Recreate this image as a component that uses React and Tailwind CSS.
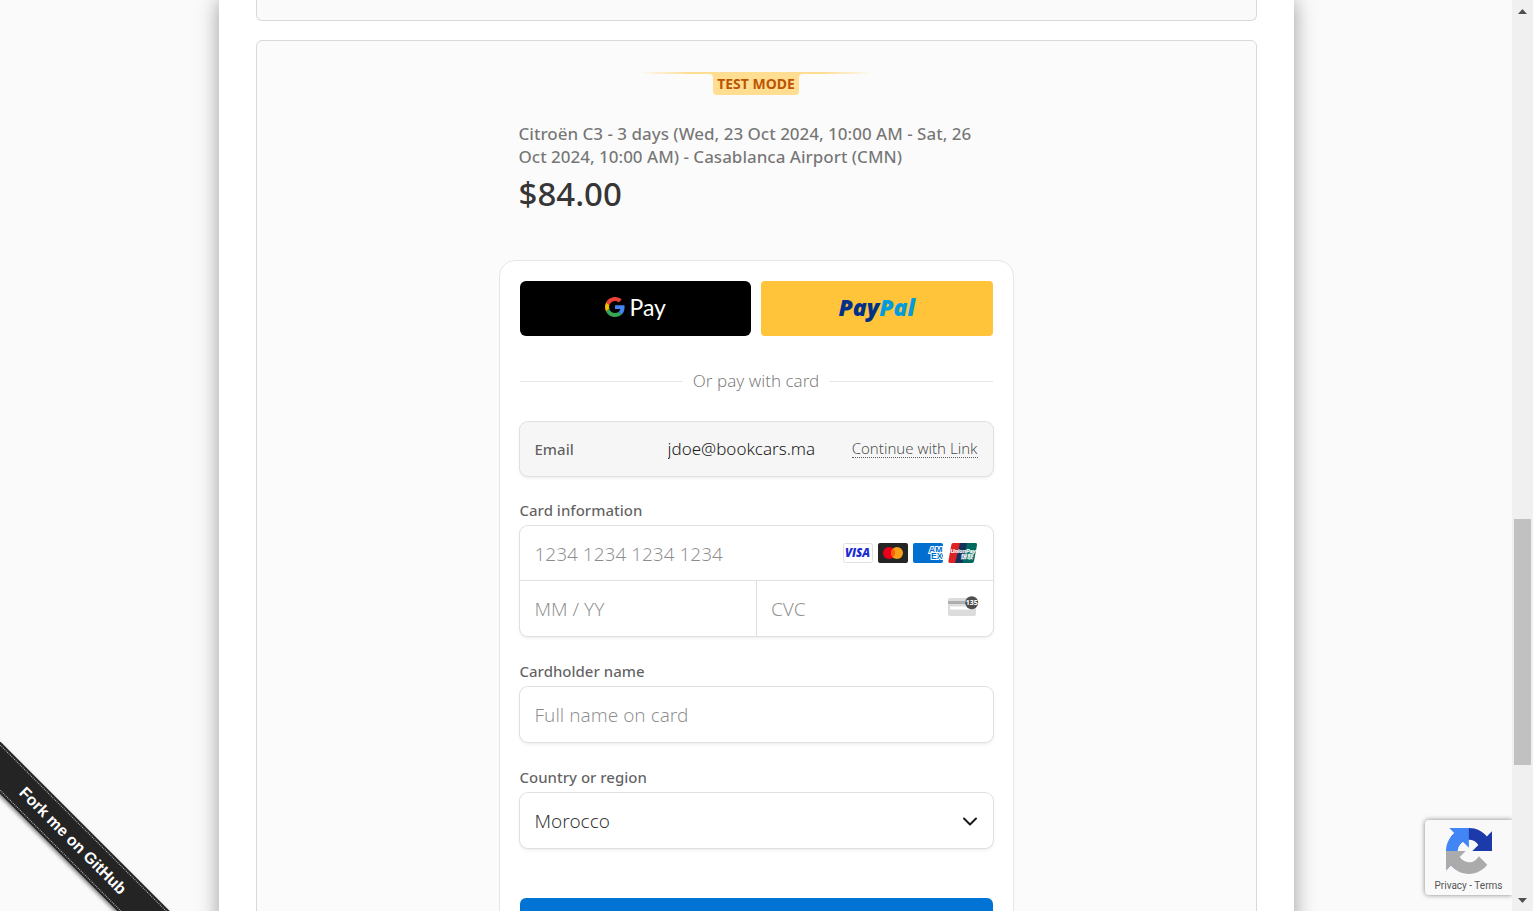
import React from "react";

const fieldBox =
  "rounded-lg shadow-[0_0_0_1px_#e0e0e0,0_2px_4px_0_rgba(0,0,0,0.07),0_1px_2px_0_rgba(0,0,0,0.05)]";
const labelText = "block text-[15px] leading-5 font-medium text-[#1a1a1a]/70";
const inputText =
  "block w-full min-w-0 bg-transparent pt-[2px] text-[19px] font-light text-[#1a1a1a]/90 outline-none placeholder:text-[#1a1a1a]/50";

function GoogleG() {
  return (
    <svg className="size-5" viewBox="0 0 48 48" aria-hidden="true">
      <path fill="#EA4335" d="M24 9.5c3.54 0 6.71 1.22 9.21 3.6l6.85-6.85C35.9 2.38 30.47 0 24 0 14.62 0 6.51 5.38 2.56 13.22l7.98 6.19C12.43 13.72 17.74 9.5 24 9.5z" />
      <path fill="#4285F4" d="M46.98 24.55c0-1.57-.15-3.09-.38-4.55H24v9.02h12.94c-.58 2.96-2.26 5.48-4.78 7.18l7.73 6c4.51-4.18 7.09-10.36 7.09-17.65z" />
      <path fill="#FBBC05" d="M10.53 28.59c-.48-1.45-.76-2.99-.76-4.59s.27-3.14.76-4.59l-7.98-6.19C.92 16.46 0 20.12 0 24c0 3.88.92 7.54 2.56 10.78l7.97-6.19z" />
      <path fill="#34A853" d="M24 48c6.48 0 11.93-2.13 15.89-5.81l-7.73-6c-2.15 1.45-4.92 2.3-8.16 2.3-6.26 0-11.57-4.22-13.47-9.91l-7.98 6.19C6.51 42.62 14.62 48 24 48z" />
    </svg>
  );
}

function Visa() {
  return (
    <svg width="30" height="20" viewBox="0 0 30 20" role="img" aria-label="Visa">
      <rect x="0.5" y="0.5" width="29" height="19" rx="2" fill="#fff" stroke="#e0e0e0" />
      <text x="14.5" y="14" textAnchor="middle" fontFamily="Open Sans, sans-serif" fontWeight="800" fontStyle="italic" fontSize="11.500" fill="#1a2bd0">VISA</text>
    </svg>
  );
}

function Mastercard() {
  return (
    <svg width="30" height="20" viewBox="0 0 30 20" role="img" aria-label="Mastercard">
      <rect width="30" height="20" rx="2" fill="#252525" />
      <circle cx="11" cy="10" r="6" fill="#eb001b" />
      <circle cx="19" cy="10" r="6" fill="#f79e1b" />
      <path d="M15 5.53a6 6 0 0 1 0 8.94 6 6 0 0 1 0-8.94z" fill="#ff5f00" />
    </svg>
  );
}

function Amex() {
  return (
    <svg width="30" height="20" viewBox="0 0 30 20" role="img" aria-label="American Express">
      <rect width="30" height="20" rx="2" fill="#016fd0" />
      <g fontFamily="Liberation Sans, sans-serif" fontWeight="700" fontSize="8.500" fill="#016fd0" stroke="#fff" strokeWidth="2" paintOrder="stroke">
        <text x="16" y="9.5">AM</text>
        <text x="18" y="16">EX</text>
      </g>
    </svg>
  );
}

function UnionPay() {
  return (
    <svg width="30" height="20" viewBox="0 0 30 20" role="img" aria-label="UnionPay">
      <path d="M5.2 0H13L8.500 20H2Q0 20 .4 18L3.400 1.600Q3.700 0 5.200 0z" fill="#dd2423" />
      <path d="M12 0H20L15.500 20H7z" fill="#16315e" />
      <path d="M19 0H27.500Q29.500 0 29 2L26 18.300Q25.600 20 24 20H14.500z" fill="#016a60" />
      <g fill="#fff" fontStyle="italic" fontWeight="700">
        <text x="2.500" y="9.500" fontFamily="Liberation Sans, sans-serif" fontSize="5.500" stroke="#fff" strokeWidth="0.2">UnionPay</text>
        <text x="12" y="16" fontFamily="Noto Sans CJK SC, sans-serif" fontSize="6.500">银联</text>
      </g>
    </svg>
  );
}

function CvcIcon() {
  return (
    <svg className="mb-[6px] shrink-0" width="31" height="20" viewBox="0 0 31 20" aria-hidden="true">
      <rect x="0" y="2" width="28" height="18" rx="2" fill="#dcdcdc" />
      <rect x="0" y="5" width="28" height="3" fill="#aeaeae" />
      <rect x="2" y="10.500" width="20" height="3" fill="#fff" />
      <circle cx="23.700" cy="6.700" r="6.500" fill="#4f4f4f" />
      <text x="23.700" y="9.200" textAnchor="middle" fontFamily="Open Sans, sans-serif" fontWeight="700" fontSize="7" fill="#fff">135</text>
    </svg>
  );
}

function RecaptchaLogo() {
  return (
    <svg className="size-[46px]" viewBox="0 0 64 64" role="img" aria-label="reCAPTCHA">
      <path fill="#1c3aa9" d="M64 31.955l-.033-1.37V4.687l-7.16 7.16C50.948 4.674 42.033.093 32.05.093c-10.4 0-19.622 4.96-25.458 12.64l11.736 11.86a15.55 15.55 0 0 1 4.754-5.334c2.05-1.6 4.952-2.906 8.968-2.906.485 0 .86.057 1.135.163 4.976.393 9.288 3.14 11.828 7.124l-8.307 8.307L64 31.953" />
      <path fill="#4285f4" d="M31.862.094l-1.37.033H4.594l7.16 7.16C4.58 13.147 0 22.06 0 32.046c0 10.4 4.96 19.622 12.64 25.458L24.5 45.768a15.55 15.55 0 0 1-5.334-4.754c-1.6-2.05-2.906-4.952-2.906-8.968 0-.485.057-.86.163-1.135.393-4.976 3.14-9.288 7.124-11.828l8.307 8.307L31.86.095" />
      <path fill="#ababab" d="M.001 32.045l.033 1.37v25.898l7.16-7.16c5.86 7.173 14.774 11.754 24.76 11.754 10.4 0 19.622-4.96 25.458-12.64l-11.736-11.86a15.55 15.55 0 0 1-4.754 5.334c-2.05 1.6-4.952 2.906-8.968 2.906-.485 0-.86-.057-1.135-.163-4.976-.393-9.288-3.14-11.828-7.124l8.307-8.307c-10.522.04-22.4.066-27.295-.005" />
    </svg>
  );
}

function TestModeBadge() {
  return (
    <div className="flex flex-col items-center">
      <div className="h-[2px] w-[236px] bg-[linear-gradient(to_right,transparent,#ffde92_22%,#ffde92_78%,transparent)]" />
      <div className="flex items-start">
        <svg width="4" height="4" viewBox="0 0 4 4" aria-hidden="true"><path d="M0 0H4V4A4 4 0 0 0 0 0z" fill="#ffde92" /></svg>
        <span className="rounded-b bg-[#ffde92] px-1 pb-px text-[14px] leading-5 font-bold text-[#bb5504]">TEST MODE</span>
        <svg width="4" height="4" viewBox="0 0 4 4" aria-hidden="true"><path d="M4 0H0V4A4 4 0 0 1 4 0z" fill="#ffde92" /></svg>
      </div>
    </div>
  );
}

function CheckoutForm() {
  return (
    <form className="mt-[43px] rounded-2xl border border-[#e6e6e6] bg-white p-5" onSubmit={(e) => e.preventDefault()}>
      <div className="grid grid-cols-2 gap-[10px]">
        <button type="button" aria-label="Google Pay" className="flex h-[55px] items-center justify-center gap-[5px] rounded-md bg-black pb-1">
          <GoogleG />
          <span className="font-[Lato] text-[23px] leading-6 text-white">Pay</span>
        </button>
        <button type="button" aria-label="PayPal" className="flex h-[55px] items-center justify-center rounded bg-[#ffc439] pb-1 font-['Open_Sans'] text-[23px] leading-6 font-extrabold italic text-[#003087]">
          Pay<span className="text-[#009cde]">Pal</span>
        </button>
      </div>

      <div className="mt-[33px] flex items-center gap-[10px]">
        <div className="h-px flex-1 bg-[#e6e6e6]" />
        <span className="text-[17px] leading-6 font-light text-[#1a1a1a]/60">Or pay with card</span>
        <div className="h-px flex-1 bg-[#e6e6e6]" />
      </div>

      <div className={"mt-[29px] flex h-[54px] items-center bg-[#f6f6f6] px-[15px] " + fieldBox}>
        <label htmlFor="email" className="w-[133px] text-[15px] font-medium text-[#1a1a1a]/70">Email</label>
        <input id="email" type="email" readOnly defaultValue="jdoe@bookcars.ma" className="min-w-0 flex-1 bg-transparent text-[17px] font-light text-[#1a1a1a] outline-none" />
        <a href="#link" className="border-b border-dotted border-[#1a1a1a]/70 text-[15px] leading-[17px] font-light text-[#1a1a1a]/80">Continue with Link</a>
      </div>

      <fieldset className="mt-6">
        <legend className={labelText}>Card information</legend>
        <div className={"mt-[6px] bg-white " + fieldBox}>
          <div className="flex h-[54px] items-center px-[15px]">
            <input aria-label="Card number" placeholder="1234 1234 1234 1234" className={inputText} />
            <div className="flex shrink-0 gap-[5px]">
              <Visa />
              <Mastercard />
              <Amex />
              <UnionPay />
            </div>
          </div>
          <div className="grid h-[56px] grid-cols-2 border-t border-[#e0e0e0]">
            <div className="flex items-center px-[15px]">
              <input aria-label="Expiration" placeholder="MM / YY" className={inputText} />
            </div>
            <div className="flex items-center border-l border-[#e0e0e0] px-[14px]">
              <input aria-label="CVC" placeholder="CVC" className={inputText} />
              <CvcIcon />
            </div>
          </div>
        </div>
      </fieldset>

      <div className="mt-[25px]">
        <label htmlFor="name" className={labelText}>Cardholder name</label>
        <div className={"mt-[6px] flex h-[55px] items-center bg-white px-[15px] " + fieldBox}>
          <input id="name" placeholder="Full name on card" className={inputText} />
        </div>
      </div>

      <div className="mt-[25px]">
        <label htmlFor="country" className={labelText}>Country or region</label>
        <div className={"mt-[6px] grid h-[55px] items-center bg-white " + fieldBox}>
          <select id="country" defaultValue="Morocco" className={"col-start-1 row-start-1 h-full appearance-none px-[15px] " + inputText}>
            <option>Morocco</option>
            <option>France</option>
          </select>
          <svg className="pointer-events-none col-start-1 row-start-1 mr-[15px] justify-self-end" width="16" height="16" viewBox="0 0 16 16" fill="none" stroke="#1a1a1a" strokeWidth="2" strokeLinecap="round" strokeLinejoin="round" aria-hidden="true">
            <path d="M2 5.500l6 6 6-6" />
          </svg>
        </div>
      </div>

      <button type="submit" aria-label="Pay" className="mt-[50px] block h-14 w-full rounded-md bg-[#0074d4]" />
    </form>
  );
}

function ForkRibbon() {
  return (
    <div className="pointer-events-none absolute bottom-0 left-0 size-[220px] overflow-hidden">
      <a href="#github" className="pointer-events-auto absolute bottom-[52px] left-[-87px] block w-80 rotate-45 bg-[#242424] py-[2px] shadow-[0_2px_4px_rgba(0,0,0,0.5)]">
        <span className="block border-y border-dotted border-white/70 text-center font-['Liberation_Sans'] text-[16px] leading-[31px] font-bold text-white">Fork me on GitHub</span>
      </a>
    </div>
  );
}

function RecaptchaBadge() {
  return (
    <div className="absolute right-0 bottom-4 flex h-[75px] w-[87px] flex-col items-center rounded-l-sm bg-[#f9f9f9] pt-2 shadow-[0_0_5px_gray]">
      <RecaptchaLogo />
      <div className="mt-[6px] font-[Roboto] text-[10px] leading-3 text-[#555]">
        <a href="#privacy">Privacy</a> - <a href="#terms">Terms</a>
      </div>
    </div>
  );
}

function Scrollbar() {
  return (
    <div className="flex w-[21px] shrink-0 flex-col items-center bg-[#f0f0f0]" aria-hidden="true">
      <svg width="21" height="21" viewBox="0 0 21 21"><path d="M6 14L10.500 9L15 14z" fill="#505050" /></svg>
      <div className="flex min-h-0 w-full flex-1 flex-col items-center">
        <div className="min-h-0 flex-[498]" />
        <div className="w-[17px] flex-[246] bg-[#c1c1c1]" />
        <div className="min-h-0 flex-[125]" />
      </div>
      <svg width="21" height="21" viewBox="0 0 21 21"><path d="M6 8L10.500 13L15 8z" fill="#505050" /></svg>
    </div>
  );
}

export default function App() {
  return (
    <div className="flex h-screen overflow-hidden bg-[#fafafa] font-['Noto_Sans','Open_Sans',sans-serif]">
      <div className="relative min-w-0 flex-1 overflow-hidden">
        <main className="mx-auto flex max-w-[1075px] flex-col gap-[19px] bg-white px-[37px] shadow-[0_0_20px_rgba(0,0,0,0.38)]">
          <section className="h-[21px] rounded-b-md border border-t-0 border-[#d9d9d9] bg-[#fafafa]" />
          <section className="rounded-md border border-[#d9d9d9] bg-[#fbfbfb] pt-[31px] pb-8">
            <div className="mx-auto max-w-[515px]">
              <TestModeBadge />
              <div className="px-5 pt-[27px]">
                <h1 className="text-[17px] leading-[23px] font-medium text-[#1a1a1a]/60">
                  Citroën C3 - 3 days (Wed, 23 Oct 2024, 10:00 AM - Sat, 26 Oct 2024, 10:00 AM) - Casablanca Airport (CMN)
                </h1>
                <p className="mt-[3px] text-[33px] leading-[46px] font-medium text-[#1a1a1a]/90">$84.00</p>
              </div>
              <CheckoutForm />
            </div>
          </section>
        </main>
        <ForkRibbon />
        <RecaptchaBadge />
      </div>
      <Scrollbar />
    </div>
  );
}
